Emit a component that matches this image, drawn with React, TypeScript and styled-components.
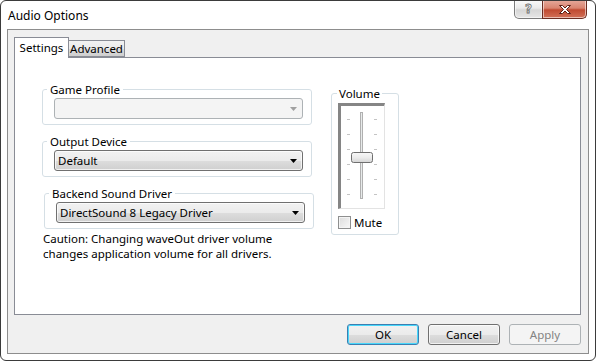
import React from "react"
import styled, { createGlobalStyle } from "styled-components"

const GlobalStyle = createGlobalStyle`
  html, body {
    margin: 0;
    padding: 0;
    background: #ffffff;
  }
  body {
    font-family: "Noto Sans", "Liberation Sans", sans-serif;
    font-size: 11.5px;
    color: #000;
  }
`

const Window = styled.div`
  width: 596px;
  height: 361px;
  box-sizing: border-box;
  border: 1px solid #3b3b3b;
  border-radius: 6px;
  background: #ffffff;
  display: flex;
  flex-direction: column;
  overflow: hidden;
`

const TitleBar = styled.div`
  height: 28px;
  display: flex;
  align-items: center;
  padding-left: 7px;
`

const Title = styled.div`
  flex: 1;
  font-size: 12px;
  line-height: 15px;
`

const CaptionButtons = styled.div`
  display: flex;
  align-self: flex-start;
  margin-top: -1px;
  margin-right: 8px;
`

const CaptionButton = styled.div<{ $close?: boolean }>`
  box-sizing: border-box;
  height: 19px;
  width: ${(p) => (p.$close ? "45px" : "29px")};
  display: flex;
  align-items: center;
  justify-content: center;
  border: 1px solid ${(p) => (p.$close ? "#6b2d22" : "#7b7b7b")};
  border-top: none;
  border-radius: ${(p) => (p.$close ? "0 0 5px 0" : "0 0 0 5px")};
  margin-left: ${(p) => (p.$close ? "-1px" : "0")};
  background: ${(p) =>
    p.$close
      ? "linear-gradient(#e6aa9c 0%, #d98470 45%, #c04a31 55%, #d27158 100%)"
      : "linear-gradient(#fbfbfb 0%, #eaeaea 45%, #d6d6d6 55%, #e6e6e6 100%)"};
  box-shadow: inset 0 0 0 1px rgba(255, 255, 255, 0.55);
`

const HelpGlyph = styled.span`
  font-family: "DejaVu Sans", sans-serif;
  font-weight: bold;
  font-size: 12px;
  line-height: 12px;
  color: #f4f4f4;
  -webkit-text-stroke: 0.8px #6e6e6e;
`

const Client = styled.div`
  flex: 1;
  margin: 0 6px 6px 6px;
  border: 1px solid #8d8d8d;
  background: #f0f0f0;
  display: flex;
  flex-direction: column;
  padding: 7px 7px 0 6px;
`

const TabStrip = styled.div`
  display: flex;
  align-items: flex-end;
  height: 20px;
`

const Tab = styled.div<{ $active?: boolean; $width: number }>`
  box-sizing: border-box;
  position: relative;
  z-index: ${(p) => (p.$active ? 1 : 0)};
  width: ${(p) => p.$width}px;
  text-align: center;
  border: 1px solid #898c95;
  border-bottom: ${(p) => (p.$active ? "none" : "1px solid #898c95")};
  height: ${(p) => (p.$active ? "21px" : "17px")};
  margin-bottom: ${(p) => (p.$active ? "-1px" : "0")};
  margin-left: ${(p) => (p.$active ? "0" : "-1px")};
  padding-top: ${(p) => (p.$active ? "2px" : "0")};
  background: ${(p) =>
    p.$active ? "#ffffff" : "linear-gradient(#f2f2f2 0%, #ebebeb 50%, #dddddd 51%, #cfcfcf 100%)"};
  line-height: 15px;
`

const Panel = styled.div`
  box-sizing: border-box;
  height: 258px;
  border: 1px solid #898c95;
  background: #ffffff;
  display: flex;
  align-items: flex-start;
  padding: 31px 0 0 27px;
  gap: 19px;
`

const LeftColumn = styled.div`
  width: 270px;
  display: flex;
  flex-direction: column;
`

const Group = styled.div<{ $shift?: number; $width?: number }>`
  box-sizing: border-box;
  width: ${(p) => p.$width ?? 270}px;
  margin-left: ${(p) => p.$shift ?? 0}px;
  border: 1px solid #d5dfe5;
  border-radius: 3px;
  padding: 0 8px 5px 11px;

  & + & {
    margin-top: 16px;
  }
`

const Legend = styled.div<{ $indent?: number; $pad?: number }>`
  width: fit-content;
  margin: -8px 0 1px ${(p) => p.$indent ?? -7}px;
  padding: 0 ${(p) => p.$pad ?? 3}px;
  background: #ffffff;
  line-height: 15px;
`

const Combo = styled.div<{ $disabled?: boolean }>`
  box-sizing: border-box;
  height: 21px;
  display: flex;
  align-items: center;
  padding: 0 5px 0 3px;
  border: 1px solid ${(p) => (p.$disabled ? "#adb2b5" : "#707070")};
  border-radius: 3px;
  background: ${(p) =>
    p.$disabled ? "#f4f4f4" : "linear-gradient(#f2f2f2 0%, #ebebeb 50%, #dddddd 51%, #cfcfcf 100%)"};
  box-shadow: inset 0 0 0 1px ${(p) => (p.$disabled ? "#f4f4f4" : "rgba(255,255,255,0.7)")};
`

const ComboText = styled.span`
  flex: 1;
  line-height: 15px;
`

const Caution = styled.div`
  margin-top: 2px;
  padding-left: 1px;
  line-height: 15px;
`

const VolumeGroup = styled(Group)`
  margin-top: 4px;
  padding: 0 0 4px 6px;
`

const SliderBox = styled.div`
  width: 47px;
  height: 106px;
  box-sizing: border-box;
  margin-top: 2px;
  border-style: solid;
  border-width: 3px 1px 1px 3px;
  border-color: #858585 #e3e3e3 #e3e3e3 #858585;
  background: #ffffff;
`

const CheckRow = styled.div`
  display: flex;
  align-items: center;
  gap: 3px;
  margin-top: 6px;
  line-height: 15px;
`

const CheckBox = styled.div`
  width: 13px;
  height: 13px;
  box-sizing: border-box;
  border: 1px solid #8e8f8f;
  background: linear-gradient(135deg, #dcdcdc, #f8f8f8);
  box-shadow: inset 0 0 0 1px #f4f4f4;
`

const ButtonRow = styled.div`
  display: flex;
  justify-content: flex-end;
  gap: 9px;
  margin-top: 9px;
`

const Button = styled.div<{ $variant?: "default" | "disabled" }>`
  box-sizing: border-box;
  width: 72px;
  height: 21px;
  display: flex;
  align-items: center;
  justify-content: center;
  border-radius: 3px;
  border: 1px solid
    ${(p) => (p.$variant === "default" ? "#3c7fb1" : p.$variant === "disabled" ? "#adb2b5" : "#707070")};
  color: ${(p) => (p.$variant === "disabled" ? "#838383" : "#000")};
  background: ${(p) =>
    p.$variant === "disabled"
      ? "#f4f4f4"
      : p.$variant === "default"
      ? "linear-gradient(#f2f2f2 0%, #ebebeb 50%, #dddddd 51%, #cfcfcf 100%)"
      : "linear-gradient(#f2f2f2 0%, #ebebeb 50%, #dddddd 51%, #cfcfcf 100%)"};
  box-shadow: inset 0 0 0 1px
    ${(p) => (p.$variant === "default" ? "#48d7fb" : p.$variant === "disabled" ? "#f4f4f4" : "rgba(255,255,255,0.7)")};
  line-height: 15px;
`

const Arrow = ({ color = "#000" }: { color?: string }) => (
  <svg width="7" height="4" viewBox="0 0 7 4">
    <path d="M0 0h7L3.5 4z" fill={color} />
  </svg>
)

const CloseGlyph = () => (
  <svg width="14" height="11" viewBox="0 0 14 11">
    <path
      d="M1.5 1.5h3l2.5 2.5 2.5-2.5h3l-4 4 4 4h-3l-2.5-2.5-2.5 2.5h-3l4-4z"
      fill="#ffffff"
      stroke="#5a1f14"
      strokeWidth="1"
      strokeLinejoin="round"
    />
  </svg>
)

const Slider = () => {
  const ticks = [13, 28, 43, 58, 73, 88]
  return (
    <svg width="43" height="102" viewBox="0 0 43 102">
      <rect x="19.5" y="6.5" width="2" height="86" fill="#e7eaea" stroke="#b0b0b0" />
      {ticks.map((y) => (
        <g key={y} stroke="#c4c4c4">
          <line x1="6" x2="9" y1={y + 0.5} y2={y + 0.5} />
          <line x1="33" x2="36" y1={y + 0.5} y2={y + 0.5} />
        </g>
      ))}
      <defs>
        <linearGradient id="thumb" x1="0" y1="0" x2="0" y2="1">
          <stop offset="0" stopColor="#f8f8f8" />
          <stop offset="0.5" stopColor="#ececec" />
          <stop offset="1" stopColor="#d4d4d4" />
        </linearGradient>
      </defs>
      <rect x="10.5" y="46.5" width="21" height="10" rx="2" fill="url(#thumb)" stroke="#6f6f6f" />
    </svg>
  )
}

const App: React.FC = () => {
  return (
    <>
      <GlobalStyle />
      <Window>
        <TitleBar>
          <Title>Audio Options</Title>
          <CaptionButtons>
            <CaptionButton>
              <HelpGlyph>?</HelpGlyph>
            </CaptionButton>
            <CaptionButton $close>
              <CloseGlyph />
            </CaptionButton>
          </CaptionButtons>
        </TitleBar>
        <Client>
          <TabStrip>
            <Tab $active $width={55}>
              Settings
            </Tab>
            <Tab $width={57}>Advanced</Tab>
          </TabStrip>
          <Panel>
            <LeftColumn>
              <Group>
                <Legend>Game Profile</Legend>
                <Combo $disabled>
                  <ComboText />
                  <Arrow color="#a0a0a0" />
                </Combo>
              </Group>
              <Group>
                <Legend>Output Device</Legend>
                <Combo>
                  <ComboText>Default</ComboText>
                  <Arrow />
                </Combo>
              </Group>
              <Group $shift={2}>
                <Legend>Backend Sound Driver</Legend>
                <Combo>
                  <ComboText>DirectSound 8 Legacy Driver</ComboText>
                  <Arrow />
                </Combo>
              </Group>
              <Caution>
                Caution: Changing waveOut driver volume
                <br />
                changes application volume for all drivers.
              </Caution>
            </LeftColumn>
            <VolumeGroup $width={68}>
              <Legend $indent={-1} $pad={2}>
                Volume
              </Legend>
              <SliderBox>
                <Slider />
              </SliderBox>
              <CheckRow>
                <CheckBox />
                <span>Mute</span>
              </CheckRow>
            </VolumeGroup>
          </Panel>
          <ButtonRow>
            <Button $variant="default">OK</Button>
            <Button>Cancel</Button>
            <Button $variant="disabled">Apply</Button>
          </ButtonRow>
        </Client>
      </Window>
    </>
  )
}

export default App
